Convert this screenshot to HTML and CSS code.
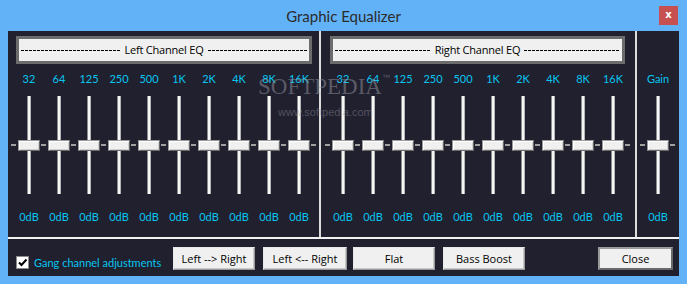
FILE: index.html
```html
<!DOCTYPE html>
<html lang="en">
<head>
    <meta charset="UTF-8">
    <title>Graphic Equalizer</title>
    <link rel="stylesheet" href="styles.css">
</head>
<body>
    <div class="window">
        <div class="titlebar">
            <span></span>
            <span class="title">Graphic Equalizer</span>
            <span class="close-x">x</span>
        </div>

        <div class="client">
            <div class="eq">
                <section class="panel panel-left">
                    <div class="channel-btn"><span>Left Channel EQ</span></div>
                    <div class="bands">
                        <div class="band"><div class="freq">32</div><div class="slider"><div class="thumb"></div></div><div class="db">0dB</div></div>
                        <div class="band"><div class="freq">64</div><div class="slider"><div class="thumb"></div></div><div class="db">0dB</div></div>
                        <div class="band"><div class="freq">125</div><div class="slider"><div class="thumb"></div></div><div class="db">0dB</div></div>
                        <div class="band"><div class="freq">250</div><div class="slider"><div class="thumb"></div></div><div class="db">0dB</div></div>
                        <div class="band"><div class="freq">500</div><div class="slider"><div class="thumb"></div></div><div class="db">0dB</div></div>
                        <div class="band"><div class="freq">1K</div><div class="slider"><div class="thumb"></div></div><div class="db">0dB</div></div>
                        <div class="band"><div class="freq">2K</div><div class="slider"><div class="thumb"></div></div><div class="db">0dB</div></div>
                        <div class="band"><div class="freq">4K</div><div class="slider"><div class="thumb"></div></div><div class="db">0dB</div></div>
                        <div class="band"><div class="freq">8K</div><div class="slider"><div class="thumb"></div></div><div class="db">0dB</div></div>
                        <div class="band"><div class="freq">16K</div><div class="slider"><div class="thumb"></div></div><div class="db">0dB</div></div>
                    </div>
                </section>

                <div class="vdiv"></div>

                <section class="panel panel-right">
                    <div class="channel-btn"><span>Right Channel EQ</span></div>
                    <div class="bands">
                        <div class="band"><div class="freq">32</div><div class="slider"><div class="thumb"></div></div><div class="db">0dB</div></div>
                        <div class="band"><div class="freq">64</div><div class="slider"><div class="thumb"></div></div><div class="db">0dB</div></div>
                        <div class="band"><div class="freq">125</div><div class="slider"><div class="thumb"></div></div><div class="db">0dB</div></div>
                        <div class="band"><div class="freq">250</div><div class="slider"><div class="thumb"></div></div><div class="db">0dB</div></div>
                        <div class="band"><div class="freq">500</div><div class="slider"><div class="thumb"></div></div><div class="db">0dB</div></div>
                        <div class="band"><div class="freq">1K</div><div class="slider"><div class="thumb"></div></div><div class="db">0dB</div></div>
                        <div class="band"><div class="freq">2K</div><div class="slider"><div class="thumb"></div></div><div class="db">0dB</div></div>
                        <div class="band"><div class="freq">4K</div><div class="slider"><div class="thumb"></div></div><div class="db">0dB</div></div>
                        <div class="band"><div class="freq">8K</div><div class="slider"><div class="thumb"></div></div><div class="db">0dB</div></div>
                        <div class="band"><div class="freq">16K</div><div class="slider"><div class="thumb"></div></div><div class="db">0dB</div></div>
                    </div>
                </section>

                <div class="vdiv"></div>

                <section class="panel panel-gain">
                    <div class="bands">
                        <div class="band"><div class="freq">Gain</div><div class="slider"><div class="thumb"></div></div><div class="db">0dB</div></div>
                    </div>
                </section>
            </div>

            <div class="hdiv"></div>

            <div class="controls">
                <label class="gang">
                    <span class="check">
                        <svg width="11" height="11" viewBox="0 0 11 11"><path d="M2 5.5 L4.5 8 L9.5 2.5" fill="none" stroke="#000" stroke-width="2"/></svg>
                    </span>
                    Gang channel adjustments
                </label>
                <button class="btn btn-lr">Left --&gt; Right</button>
                <button class="btn btn-rl">Left &lt;-- Right</button>
                <button class="btn btn-flat">Flat</button>
                <button class="btn btn-bass">Bass Boost</button>
                <button class="btn btn-close">Close</button>
            </div>
        </div>

        <!-- watermark from the screenshot -->
        <div class="watermark">
            <span class="wm-big">SOFTPEDIA<sup>™</sup></span>
            <span class="wm-small">www.softpedia.com</span>
        </div>
    </div>
</body>
</html>
```

FILE: styles.css
```css
* {
    margin: 0;
    padding: 0;
    box-sizing: border-box;
}

body {
    font-family: Lato, 'Open Sans', sans-serif;
    background: #62b2f7;
}

.window {
    position: relative;
    width: 687px;
    height: 284px;
    background: #62b2f7;
    padding: 0 8px 8px;
}

.titlebar {
    height: 31px;
    display: grid;
    grid-template-columns: 1fr auto 1fr;
    align-items: start;
}

.title {
    font-size: 15px;
    line-height: 20px;
    margin-top: 6px;
    color: #2b2b2b;
}

.close-x {
    justify-self: end;
    width: 19px;
    height: 19px;
    margin-top: 6px;
    margin-right: 1px;
    background: #c75050;
    color: #fff;
    font-family: 'DejaVu Sans', sans-serif;
    font-weight: bold;
    font-size: 10px;
    line-height: 18px;
    text-align: center;
}

.client {
    height: 245px;
    background: #20202f;
    display: flex;
    flex-direction: column;
}

.eq {
    height: 206px;
    display: flex;
}

.panel {
    display: flex;
    flex-direction: column;
}

.panel-left {
    width: 311px;
    padding-left: 6px;
}

.panel-right {
    width: 314px;
    padding-left: 7px;
}

.panel-gain {
    width: 42px;
    padding-left: 6px;
    padding-top: 33px;
}

.vdiv {
    width: 2px;
    background: #dcdcdc;
}

.hdiv {
    height: 2px;
    background: #f2f2f2;
}

.channel-btn {
    height: 28px;
    margin-top: 5px;
    border: 3px solid #6c6c6c;
    background: #f0f0f0;
    display: flex;
    align-items: center;
    gap: 4px;
    padding: 0 2px 1px;
    white-space: nowrap;
    font-family: 'Open Sans', sans-serif;
    font-size: 11px;
    letter-spacing: -0.2px;
    color: #000;
}

/* the dashed rules either side of the caption */
.channel-btn::before,
.channel-btn::after {
    content: "";
    flex: 1;
    height: 1px;
    margin-top: 1px;
    background: repeating-linear-gradient(to right, #000 0 3px, transparent 3px 4px);
}

.panel-left .channel-btn {
    margin-left: 2px;
    margin-right: 7px;
}

.panel-right .channel-btn {
    margin-left: 2px;
    margin-right: 10px;
}

.bands {
    display: flex;
    padding-top: 8px;
}

.band {
    width: 30px;
    display: flex;
    flex-direction: column;
    align-items: center;
}

.freq,
.db {
    font-size: 11px;
    line-height: 14px;
    color: #08c6f0;
    white-space: nowrap;
}

.slider {
    position: relative;
    width: 30px;
    height: 98px;
    margin-top: 10px;
    display: flex;
    align-items: center;
    justify-content: center;
    background:
        linear-gradient(to right, #8c8c8c 0 1px, #f6f6f6 1px 3px, #b4b4b4 3px 4px) no-repeat center / 4px 100%;
}

/* tick dashes between the thumbs */
.slider::before {
    content: "";
    position: absolute;
    left: -3px;
    top: 48px;
    width: 5px;
    height: 2px;
    background: #a0a0a0;
}

.band:last-child .slider::after {
    content: "";
    position: absolute;
    right: -2px;
    top: 48px;
    width: 5px;
    height: 2px;
    background: #a0a0a0;
}

.thumb {
    width: 22px;
    height: 11px;
    margin-top: 1px;
    background: #f0f0f0;
    border: 1px solid;
    border-color: #9a9a9a #6a6a6a #6a6a6a #9a9a9a;
    box-shadow: inset 1px 1px #ffffff, inset -1px -1px #cfcfcf;
}

.db {
    margin-top: 16px;
}

.controls {
    flex: 1;
    display: flex;
    align-items: flex-start;
    padding-top: 8px;
    padding-left: 8px;
}

.gang {
    display: flex;
    align-items: center;
    gap: 5px;
    margin-top: 9px;
    width: 157px;
    font-size: 11px;
    color: #08c6f0;
    white-space: nowrap;
}

.check {
    width: 13px;
    height: 13px;
    background: #fff;
    border: 1px solid #8a8a8a;
    display: flex;
    align-items: center;
    justify-content: center;
}

.btn {
    height: 23px;
    font-family: 'Open Sans', sans-serif;
    font-size: 11px;
    color: #000;
    background: #f0f0f0;
    border: 1px solid;
    border-color: #e8e8e8 #9a9a9a #9a9a9a #e8e8e8;
    box-shadow: inset -1px -1px #c8c8c8;
}

.btn-lr {
    width: 82px;
}

.btn-rl {
    width: 84px;
    margin-left: 8px;
}

.btn-flat {
    width: 82px;
    margin-left: 6px;
}

.btn-bass {
    width: 82px;
    margin-left: 8px;
}

.btn-close {
    width: 75px;
    margin-left: 73px;
    border: 2px solid;
    border-color: #9a9a9a #6a6a6a #6a6a6a #9a9a9a;
    box-shadow: none;
}

.watermark {
    position: absolute;
    left: 258px;
    top: 64px;
    display: flex;
    flex-direction: column;
    pointer-events: none;
}

.wm-big {
    font-family: 'Liberation Serif', serif;
    font-size: 23px;
    line-height: 28px;
    color: rgba(150, 150, 160, 0.5);
}

.wm-big sup {
    font-family: 'Liberation Sans', sans-serif;
    font-size: 8px;
    vertical-align: 14px;
}

.wm-small {
    font-family: 'Liberation Sans', sans-serif;
    font-size: 11px;
    line-height: 14px;
    margin-left: 20px;
    margin-top: 4px;
    color: rgba(150, 150, 160, 0.45);
}
```
